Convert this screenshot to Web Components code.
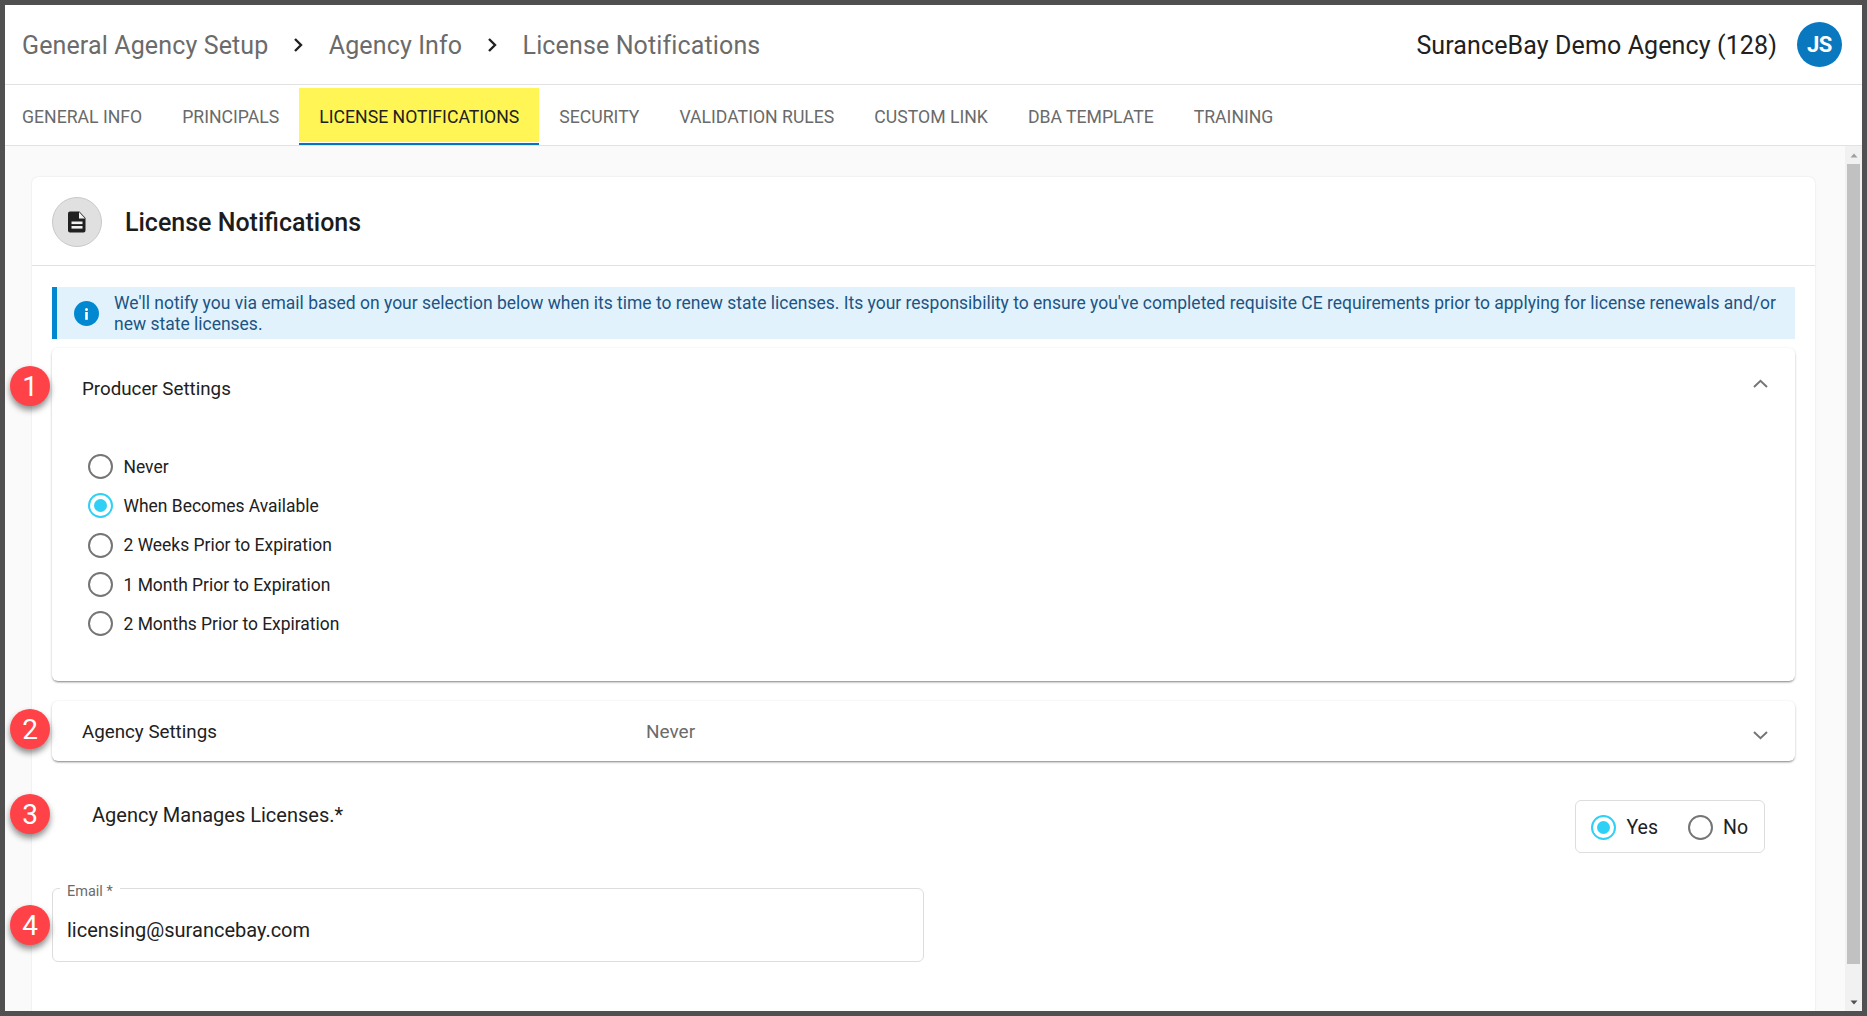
<!DOCTYPE html>
<html><head><meta charset="utf-8"><title>License Notifications</title>
<style>
html,body{margin:0;padding:0;height:100%;overflow:hidden;background:#505050}
body{font-family:Roboto,"Liberation Sans",sans-serif}
</style></head><body>
<app-frame>
  <app-header slot="header">
    <bread-crumb>General Agency Setup</bread-crumb>
    <bread-crumb>Agency Info</bread-crumb>
    <bread-crumb last>License Notifications</bread-crumb>
    <span slot="agency">SuranceBay Demo Agency (128)</span>
    <span slot="avatar">JS</span>
  </app-header>
  <tab-bar slot="tabs">
    <tab-item>GENERAL INFO</tab-item>
    <tab-item>PRINCIPALS</tab-item>
    <tab-item active>LICENSE NOTIFICATIONS</tab-item>
    <tab-item>SECURITY</tab-item>
    <tab-item>VALIDATION RULES</tab-item>
    <tab-item>CUSTOM LINK</tab-item>
    <tab-item>DBA TEMPLATE</tab-item>
    <tab-item>TRAINING</tab-item>
  </tab-bar>
  <content-card>
    <span slot="title">License Notifications</span>
    <info-alert>We'll notify you via email based on your selection below when its time to renew state licenses. Its your responsibility to ensure you've completed requisite CE requirements prior to applying for license renewals and/or new state licenses.</info-alert>
    <accordion-panel open badge="1" title-text="Producer Settings">
      <radio-option>Never</radio-option>
      <radio-option checked>When Becomes Available</radio-option>
      <radio-option>2 Weeks Prior to Expiration</radio-option>
      <radio-option>1 Month Prior to Expiration</radio-option>
      <radio-option>2 Months Prior to Expiration</radio-option>
    </accordion-panel>
    <accordion-panel badge="2" title-text="Agency Settings" summary="Never"></accordion-panel>
    <manage-row badge="3"></manage-row>
    <email-field badge="4" label="Email *" value="licensing@surancebay.com"></email-field>
  </content-card>
</app-frame>
<script>
function def(name, html, cls){
  const t=document.createElement('template');t.innerHTML=html;
  customElements.define(name, class extends HTMLElement{
    constructor(){super();this.attachShadow({mode:'open'}).appendChild(t.content.cloneNode(true));}
    connectedCallback(){ if(cls) cls.call(this); }
  });
}
def('app-frame',`<style>
:host{display:flex;flex-direction:column;box-sizing:border-box;width:1867px;height:1016px;border:5px solid #505050;background:#fff;overflow:hidden}
.body{flex:1;min-height:0;display:flex;background:#fafafa}
.main{flex:1;min-width:0;padding:31px 30px 0 27px;overflow:hidden}
.sb{width:17px;background:#f1f1f1;display:flex;flex-direction:column;align-items:center;flex:none}
.up,.dn{height:18px;flex:none;display:flex;align-items:center;justify-content:center}
.thumb{width:13px;background:#c1c1c1;flex:none;height:800px}
.fill{flex:1}
</style><slot name="header"></slot><slot name="tabs"></slot>
<div class="body"><div class="main"><slot></slot></div>
<div class="sb"><div class="up"><svg width="8" height="5" viewBox="0 0 8 5"><path d="M4 0.5 7.5 4.5H.5z" fill="#a0a0a0"/></svg></div><div class="thumb"></div><div class="fill"></div><div class="dn"><svg width="8" height="5" viewBox="0 0 8 5"><path d="M.5.5h7L4 4.5z" fill="#505050"/></svg></div></div></div>`);
def('app-header',`<style>
:host{display:flex;align-items:center;height:80px;box-sizing:border-box;background:#fff;border-bottom:1px solid #e2e2e2;padding:0 20px 0 17px;flex:none}
.crumbs{display:flex;align-items:center;flex:1;padding-top:2px}
.agency{font-size:25px;color:#212121;margin-right:20px;letter-spacing:.115px;padding-top:2px}
.av{width:45px;height:45px;box-sizing:border-box;padding-bottom:1px;border-radius:50%;background:#0a78bf;color:#fff;font-weight:700;font-size:22px;letter-spacing:-.5px;display:flex;align-items:center;justify-content:center}
</style><div class="crumbs"><slot></slot></div><div class="agency"><slot name="agency"></slot></div><div class="av"><slot name="avatar"></slot></div>`);
def('bread-crumb',`<style>
:host{display:inline-flex;align-items:center;font-size:25px;color:#6b6b6b;letter-spacing:.13px}
svg{margin:-2px 25.3px 0 25px;display:block}
:host([last]) svg{display:none}
</style><slot></slot><svg width="10" height="16" viewBox="0 0 10 16"><path d="M2 2l6 6-6 6" fill="none" stroke="#212121" stroke-width="2.4"/></svg>`);
def('tab-bar',`<style>
:host{display:flex;height:61px;box-sizing:border-box;background:#fff;border-bottom:1px solid #e2e2e2;flex:none;align-items:stretch}
</style><slot></slot>`);
def('tab-item',`<style>
:host{display:flex;box-sizing:border-box;height:60px;padding:3px 0 0 0;font-size:17.65px;font-weight:400;color:#6a6a6a;flex:none}
.in{display:flex;align-items:center;padding:3px 20px 0;height:54px;box-sizing:border-box}
:host(:first-child) .in{padding-left:17px}
:host([active]){color:#212121;border-bottom:2px solid #0277bd}
:host([active]) .in{background:#fff656}
</style><div class="in"><slot></slot></div>`);
def('content-card',`<style>
:host{display:block;background:#fff;border-radius:6px 6px 0 0;box-shadow:0 0 2px rgba(0,0,0,.12);min-height:900px}
.hd{display:flex;align-items:center;height:89px;box-sizing:border-box;border-bottom:1px solid #e2e2e2;padding:0 20px}
.ic{width:50px;height:50px;box-sizing:border-box;border-radius:50%;background:#e0e0e0;border:1px solid #c9c9c9;display:flex;align-items:center;justify-content:center;margin-right:23px;margin-top:1px}
.t{font-size:25px;font-weight:500;color:#1c1c1c;padding-top:3px}
.bd{padding:21px 20px 0}
</style><div class="hd"><div class="ic"><svg width="18" height="22" viewBox="0 0 18 22"><path d="M2 0.5h9.5L17.5 7v12.5a2 2 0 0 1-2 2H2a2 2 0 0 1-2-2v-17a2 2 0 0 1 2-2z" fill="#212121"/><path d="M11 1v6.5h6z" fill="#f2f2f2"/><rect x="3.5" y="10.5" width="11" height="2.6" fill="#f2f2f2"/><rect x="3.5" y="15" width="11" height="2.6" fill="#f2f2f2"/></svg></div><div class="t"><slot name="title"></slot></div></div><div class="bd"><slot></slot></div>`);
def('info-alert',`<style>
:host{display:flex;align-items:center;box-sizing:border-box;height:52px;background:#e1f2fd;border-left:5px solid #0288d1;padding:5px 15px 4px 17px;font-size:17.49px;line-height:21px;color:#1c5483;margin-bottom:9px}
svg{flex:none;margin-right:15px}
.t{padding-top:1px}
</style><svg width="25" height="25" viewBox="0 0 25 25"><circle cx="12.5" cy="12.5" r="12.5" fill="#0288d1"/><circle cx="12.5" cy="8.4" r="1.5" fill="#fff"/><rect x="11.2" y="11" width="2.6" height="7.8" fill="#fff"/></svg><div class="t"><slot></slot></div>`);
def('callout-badge',`<style>
:host{display:flex;position:absolute;left:-42px;width:40px;height:40px;border-radius:50%;background:#ff4247;color:#fff;font-size:28px;align-items:center;justify-content:center;box-shadow:0 4px 6px rgba(0,0,0,.45)}
</style><slot></slot>`);
const CH='<path d="M1 8 7.5 1.8 14 8" fill="none" stroke="#757575" stroke-width="2"/>';
def('accordion-panel',`<style>
:host{display:block;position:relative;background:#fff;border-radius:6px;box-shadow:0 2px 2px -1px rgba(0,0,0,.35),0 1px 3px 0 rgba(0,0,0,.2);margin-bottom:20px}
.h{display:flex;align-items:center;height:60px;padding:0 27px 0 30px;position:relative}
.tt{font-size:18.75px;color:#212121;width:564px;padding-top:1px}
.s{font-size:19px;color:#6b6b6b;flex:1}
:host([open]) .h{height:80px}
svg{display:block;margin-top:8px;transform:rotate(180deg)}
:host([open]) svg{transform:none;margin-top:-8px}
.b{display:none;padding:19px 0 38px 36px}
:host([open]) .b{display:block}
callout-badge{top:18px}
:host(:not([open])) callout-badge{top:8px}
</style><callout-badge></callout-badge><div class="h"><div class="tt"></div><div class="s"></div><svg width="15" height="10" viewBox="0 0 15 10">${CH}</svg></div><div class="b"><slot></slot></div>`,function(){
  const r=this.shadowRoot;r.querySelector('.tt').textContent=this.getAttribute('title-text');
  r.querySelector('.s').textContent=this.getAttribute('summary')||'';
  r.querySelector('callout-badge').textContent=this.getAttribute('badge');
});
def('radio-option',`<style>
:host{display:flex;align-items:center;height:39.3px;font-size:17.45px;color:#212121}
.r{width:25px;height:25px;box-sizing:border-box;border-radius:50%;border:2.5px solid #757575;margin-right:10.5px;display:flex;align-items:center;justify-content:center;flex:none}
:host([checked]) .r{border-color:#2fd0f5}
:host([checked]) .r::after{content:"";width:13px;height:13px;border-radius:50%;background:#2fd0f5}
</style><span class="r"></span><slot></slot>`);
def('manage-row',`<style>
:host{display:flex;position:relative;height:91px;padding:0 30px 0 40px;box-sizing:border-box}
callout-badge{top:13px}
.l{flex:1;font-size:20px;color:#212121;padding-top:22px;line-height:24px}
.g{display:flex;align-items:center;box-sizing:border-box;height:53px;width:190px;margin-top:19px;border:1px solid #ddd;border-radius:6px;padding:1px 15px 0}
radio-option{font-size:19.5px}
radio-option+radio-option{margin-left:29.5px}
</style><callout-badge></callout-badge><div class="l">Agency Manages Licenses.*</div><div class="g"><radio-option checked>Yes</radio-option><radio-option>No</radio-option></div>`,function(){
  this.shadowRoot.querySelector('callout-badge').textContent=this.getAttribute('badge');
});
def('email-field',`<style>
:host{display:block;position:relative;box-sizing:border-box;width:872px;height:74px;border:1px solid #ddd;border-radius:6px;margin-top:16px;padding:21px 14px 0}
callout-badge{top:16px;left:-43px}
.lb{position:absolute;left:7px;top:-7px;background:#fff;padding:0 7px;font-size:14.5px;color:#6b6b6b;line-height:20px}
.v{font-size:20px;color:#212121;line-height:40px}
</style><callout-badge></callout-badge><div class="lb"></div><div class="v"></div>`,function(){
  const r=this.shadowRoot;
  r.querySelector('callout-badge').textContent=this.getAttribute('badge');
  r.querySelector('.lb').textContent=this.getAttribute('label');
  r.querySelector('.v').textContent=this.getAttribute('value');
});
</script>
</body></html>
